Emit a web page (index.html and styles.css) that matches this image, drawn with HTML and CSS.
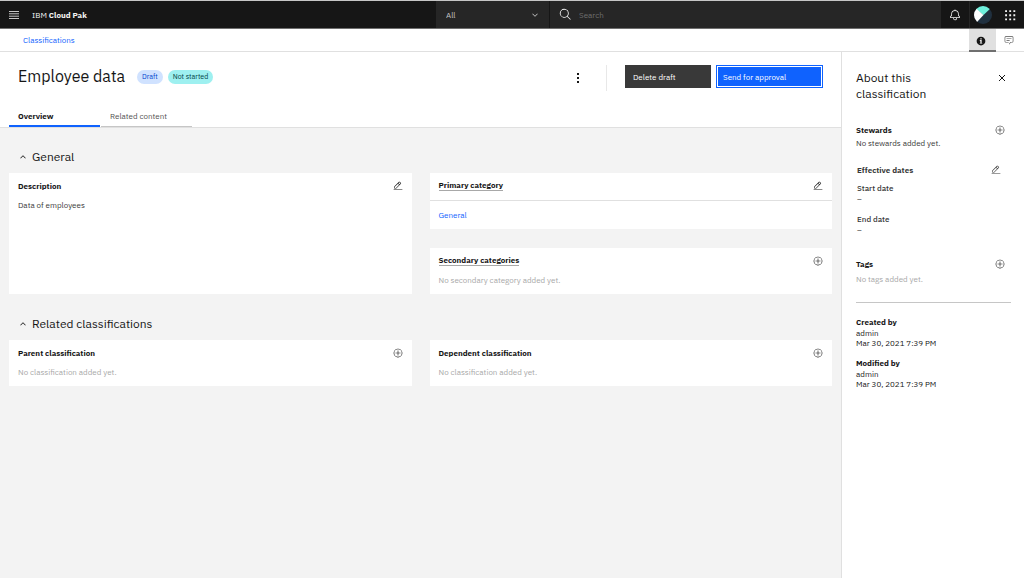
FILE: index.html
```html
<!DOCTYPE html>
<html lang="en">
<head>
<meta charset="utf-8">
<meta name="viewport" content="width=device-width, initial-scale=1">
<title>Employee data</title>
<link rel="stylesheet" href="styles.css">
</head>
<body>
<svg class="sprite" aria-hidden="true">
  <symbol id="add" viewBox="0 0 32 32"><path d="M16 4a12 12 0 1 1-12 12A12 12 0 0 1 16 4m0-2a14 14 0 1 0 14 14A14 14 0 0 0 16 2Z"/><path d="M24 15h-7V8h-2v7H8v2h7v7h2v-7h7z"/></symbol>
  <symbol id="edit" viewBox="0 0 32 32"><path d="M2 27h28v2H2zM25.4 9c.8-.8.8-2 0-2.8l-3.6-3.6c-.8-.8-2-.8-2.8 0l-15 15V24h6.400zM20.400 4 24 7.600l-3 3L17.400 7zM6 22v-3.600l10-10 3.600 3.600-10 10z"/></symbol>
  <symbol id="chevron-down" viewBox="0 0 32 32"><path d="M16 23 5 12l2-2 9 9 9-9 2 2z"/></symbol>
  <symbol id="chevron-up" viewBox="0 0 32 32"><path d="m16 9 11 11-2 2-9-9-9 9-2-2z"/></symbol>
</svg>

<header class="topbar">
  <button class="icon-button menu" aria-label="Menu"><svg class="menu-icon" viewBox="0 0 10 8"><path d="M0 .5h10M0 2.800h10M0 5.200h10M0 7.500h10"/></svg></button>
  <a class="brand" href="#">IBM <strong>Cloud Pak</strong></a>
  <div class="scope">
    <select aria-label="Search scope"><option>All</option></select>
    <svg class="chevron"><use href="#chevron-down"/></svg>
  </div>
  <label class="search">
    <svg class="search-icon" viewBox="0 0 32 32"><path d="m29 27.600-7.600-7.500A11 11 0 1 0 20 21.500l7.600 7.500zM4 13a9 9 0 1 1 9 9 9 9 0 0 1-9-9z"/></svg>
    <input type="search" placeholder="Search" aria-label="Search">
  </label>
  <button class="icon-button tool" aria-label="Notifications"><svg class="bell" viewBox="0 0 32 32"><path d="M28.700 19.300 26 16.600V13a10 10 0 0 0-9-9.900V1h-2v2.100A10 10 0 0 0 6 13v3.600l-2.700 2.700A1 1 0 0 0 3 20v3a1 1 0 0 0 1 1h7v.8a5.100 5.100 0 0 0 4.500 5.200A5 5 0 0 0 21 25v-1h7a1 1 0 0 0 1-1v-3a1 1 0 0 0-.3-.7zM19 25a3 3 0 0 1-6 0v-1h6zm8-3H5v-1.600l2.700-2.700A1 1 0 0 0 8 17v-4a8 8 0 0 1 16 0v4a1 1 0 0 0 .3.700l2.700 2.700z"/></svg></button>
  <button class="icon-button tool profile" aria-label="Profile"><svg class="avatar" viewBox="0 0 18 18"><defs><clipPath id="disc"><circle cx="9" cy="9" r="9"/></clipPath></defs><g clip-path="url(#disc)"><path fill="#20303f" d="M0 0h18v18H0z"/><path fill="#6ff0dc" d="M0 0h18v1L9.500 9 2 3z"/><path fill="#fff" d="M0 1 3 3.200 9.500 9 3 16 0 18z"/></g></svg></button>
  <button class="icon-button tool" aria-label="App switcher"><svg class="grid-icon" viewBox="0 0 32 32"><path d="M3 3h5v5H3zM14 3h5v5h-5zM25 3h5v5h-5zM3 14h5v5H3zM14 14h5v5h-5zM25 14h5v5h-5zM3 25h5v5H3zM14 25h5v5h-5zM25 25h5v5h-5z"/></svg></button>
</header>

<div class="subbar">
  <nav class="breadcrumb" aria-label="Breadcrumb"><a href="#">Classifications</a></nav>
  <button class="icon-button panel-toggle active" aria-label="Information"><svg class="info" viewBox="0 0 32 32"><path d="M16 2a14 14 0 1 0 0 28 14 14 0 0 0 0-28z"/><path fill="#fff" d="M14 7h4v4h-4zM12 13h6v9h2v2h-8v-2h2v-7h-2z"/></svg></button>
  <button class="icon-button panel-toggle" aria-label="Comments"><svg class="comment" viewBox="0 0 32 32"><path d="M17.700 30 16 29l4-7h6a2 2 0 0 0 2-2V8a2 2 0 0 0-2-2H6a2 2 0 0 0-2 2v12a2 2 0 0 0 2 2h9v2H6a4 4 0 0 1-4-4V8a4 4 0 0 1 4-4h20a4 4 0 0 1 4 4v12a4 4 0 0 1-4 4h-4.800z"/><path d="M8 10h16v2H8zM8 16h10v2H8z"/></svg></button>
</div>

<div class="layout">
  <main class="main">
    <div class="page-header">
      <div class="title-row">
        <h1>Employee data</h1>
        <span class="tag draft">Draft</span>
        <span class="tag status">Not started</span>
        <div class="actions">
          <button class="icon-button overflow" aria-label="More actions"><svg class="kebab" viewBox="0 0 4 10"><path d="M1 0h2v2H1zM1 4h2v2H1zM1 8h2v2H1z"/></svg></button>
          <button class="button secondary">Delete draft</button>
          <button class="button primary">Send for approval</button>
        </div>
      </div>
      <nav class="tabs" aria-label="Sections">
        <a class="tab selected" href="#" aria-current="page">Overview</a>
        <a class="tab" href="#">Related content</a>
      </nav>
    </div>

    <section class="section">
      <h2><button class="section-toggle" aria-expanded="true"><svg class="chevron"><use href="#chevron-up"/></svg>General</button></h2>
      <div class="columns">
        <article class="card">
          <div class="card-head"><h3>Description</h3><button class="icon-button" aria-label="Edit description"><svg class="icon"><use href="#edit"/></svg></button></div>
          <p class="card-text">Data of employees</p>
        </article>
        <div class="stack">
          <article class="card">
            <div class="card-head ruled"><h3 class="term">Primary category</h3><button class="icon-button" aria-label="Edit primary category"><svg class="icon"><use href="#edit"/></svg></button></div>
            <p class="card-value"><a href="#">General</a></p>
          </article>
          <article class="card">
            <div class="card-head"><h3 class="term">Secondary categories</h3><button class="icon-button" aria-label="Add secondary category"><svg class="icon"><use href="#add"/></svg></button></div>
            <p class="card-text empty">No secondary category added yet.</p>
          </article>
        </div>
      </div>
    </section>

    <section class="section">
      <h2><button class="section-toggle" aria-expanded="true"><svg class="chevron"><use href="#chevron-up"/></svg>Related classifications</button></h2>
      <div class="columns">
        <article class="card">
          <div class="card-head"><h3>Parent classification</h3><button class="icon-button" aria-label="Add parent classification"><svg class="icon"><use href="#add"/></svg></button></div>
          <p class="card-text empty">No classification added yet.</p>
        </article>
        <article class="card">
          <div class="card-head"><h3>Dependent classification</h3><button class="icon-button" aria-label="Add dependent classification"><svg class="icon"><use href="#add"/></svg></button></div>
          <p class="card-text empty">No classification added yet.</p>
        </article>
      </div>
    </section>
  </main>

  <aside class="about">
    <div class="about-head"><h2>About this classification</h2><button class="icon-button" aria-label="Close"><svg class="close" viewBox="0 0 8 8"><path d="m1 1 6 6M7 1 1 7"/></svg></button></div>
    <section class="fact stewards">
      <div class="fact-head"><h3>Stewards</h3><button class="icon-button" aria-label="Add steward"><svg class="icon"><use href="#add"/></svg></button></div>
      <p>No stewards added yet.</p>
    </section>
    <section class="fact dates">
      <div class="fact-head"><h3>Effective dates</h3><button class="icon-button" aria-label="Edit effective dates"><svg class="icon"><use href="#edit"/></svg></button></div>
      <dl>
        <dt>Start date</dt><dd>–</dd>
        <dt>End date</dt><dd>–</dd>
      </dl>
    </section>
    <section class="fact tags">
      <div class="fact-head"><h3>Tags</h3><button class="icon-button" aria-label="Add tag"><svg class="icon"><use href="#add"/></svg></button></div>
      <p class="empty">No tags added yet.</p>
    </section>
    <section class="audit">
      <h3>Created by</h3>
      <p>admin<br>Mar 30, 2021 7:39 PM</p>
      <h3>Modified by</h3>
      <p>admin<br>Mar 30, 2021 7:39 PM</p>
    </section>
  </aside>
</div>
</body>
</html>
```
FILE: styles.css
```css
* { box-sizing: border-box; }

body {
  margin: 0;
  min-height: 100vh;
  display: flex;
  flex-direction: column;
  background: #fff;
  color: #161616;
  font: 8px/12px "IBM Plex Sans", "Noto Sans", sans-serif;
}

h1, h2, h3, p, dl, dd { margin: 0; font-size: inherit; font-weight: 400; }
h3 { font-weight: 700; }
a { color: #0f62fe; text-decoration: none; }
button, input, select { font: inherit; color: inherit; border: 0; border-radius: 0; background: none; padding: 0; margin: 0; }
svg { display: block; fill: currentColor; flex: none; }
.sprite { position: absolute; width: 0; height: 0; }

.icon-button { display: flex; align-items: center; justify-content: center; flex: none; }
.icon { width: 10px; height: 10px; }
.chevron { width: 8px; height: 8px; }

.topbar {
  display: flex;
  height: 29px;
  border-top: 1px solid #c6c6c6;
  border-bottom: 1px solid #6f6f6f;
  background: #161616;
  color: #f4f4f4;
}
.menu { width: 28px; }
.menu-icon { width: 10px; height: 8px; fill: none; stroke: #c6c6c6; }
.brand { flex: 404; align-self: center; padding-left: 4px; color: #f4f4f4; }
.scope { flex: 113; display: grid; align-items: center; background: #262626; border-right: 1px solid #161616; color: #c6c6c6; }
.scope select { grid-area: 1 / 1; height: 27px; width: 100%; padding: 1px 10px 0; appearance: none; background: #262626; }
.scope .chevron { grid-area: 1 / 1; justify-self: end; margin-right: 10px; pointer-events: none; }
.search { flex: 382; display: flex; align-items: center; gap: 7px; padding-left: 9px; background: #262626; }
.search-icon { width: 13px; height: 13px; }
.search input { flex: 1; min-width: 0; outline-offset: -1px; }
.search input::placeholder { color: #6f6f6f; opacity: 1; }
.tool { width: 28px; }
.profile { width: 27px; border-left: 1px solid #262626; }
.bell { width: 12px; height: 12px; }
.avatar { width: 18px; height: 18px; }
.grid-icon { width: 12px; height: 12px; }

.subbar { display: flex; height: 23px; border-bottom: 1px solid #e0e0e0; }
.breadcrumb { flex: 1; align-self: center; padding-left: 23px; }
.panel-toggle { width: 28px; height: 23px; padding-right: 3px; border-bottom: 2px solid transparent; color: #525252; }
.panel-toggle.active { width: 27px; padding-top: 2px; border-color: #6f6f6f; background: #e0e0e0; color: #161616; }
.info, .comment { width: 10px; height: 10px; }

.layout { flex: 1; display: flex; }
.main { flex: 1; min-width: 0; background: #f3f3f3; }

.page-header { background: #fff; border-bottom: 1px solid #e0e0e0; }
.title-row { display: flex; align-items: flex-start; height: 54px; padding: 13px 18px 0; }
h1 { font-size: 16px; line-height: 23px; margin-right: 12px; }
.tag { height: 14px; margin-top: 5px; padding: 0 5px; border-radius: 7px; font-size: 7px; line-height: 14px; }
.draft { background: #d0e2ff; color: #0043ce; margin-right: 5px; }
.status { background: #9ef0f0; color: #004144; }
.actions { display: flex; align-items: flex-start; gap: 5px; margin-left: auto; }
.overflow { width: 58px; height: 26px; border-right: 1px solid #e8e8e8; margin-right: 13px; }
.kebab { width: 4px; height: 10px; }
.button { height: 23px; padding: 0 8px; text-align: left; color: #fff; }
.secondary { width: 86px; background: #393939; }
.primary { width: 107px; padding: 0 6px; background: #0f62fe; border: 1px solid #0f62fe; box-shadow: inset 0 0 0 1px #fff; }

.tabs { display: flex; gap: 1px; padding: 0 9px; }
.tab { width: 91px; height: 21px; padding: 4px 9px 0; border-bottom: 1px solid #c6c6c6; color: #525252; }
.selected { border-bottom: 2px solid #0f62fe; color: #161616; font-weight: 700; }

.section { padding: 19px 9px 0; }
.section + .section { padding-top: 20px; }
.section-toggle { display: flex; align-items: center; gap: 5px; padding-left: 10px; margin-bottom: 6px; font-size: 12px; line-height: 20px; }
.columns { display: grid; grid-template-columns: 1fr 1fr; gap: 18px; }
.stack { display: grid; gap: 19px; }
.card { background: #fff; }
.card-head { display: flex; justify-content: space-between; align-items: center; height: 27px; padding: 0 9px 2px; }
.ruled { height: 28px; border-bottom: 1px solid #e0e0e0; }
.term { line-height: 10px; border-bottom: 1px solid #a8a8a8; }
.card-text { padding: 0 9px 8px; line-height: 11px; color: #393939; }
.card-value { padding: 9px 9px 8px; line-height: 11px; }
.empty, .card-text.empty { color: #a8a8a8; }

.about { width: 183px; padding: 18px 13px 18px 14px; border-left: 1px solid #e0e0e0; }
.about-head { display: flex; justify-content: space-between; align-items: flex-start; margin-bottom: 22px; padding-right: 5px; }
.about-head h2 { width: 90px; font-size: 12px; line-height: 16px; }
.about-head .icon-button { height: 16px; }
.close { width: 8px; height: 8px; fill: none; stroke: currentColor; }
.fact-head { display: flex; justify-content: space-between; align-items: center; height: 12px; padding-right: 6px; }
.fact p { line-height: 15px; color: #393939; }
.fact p.empty { line-height: 18px; color: #a8a8a8; }
.dates { margin: 13px 0 23px; padding: 0 4px 0 1px; color: #393939; }
.dates dl { padding-top: 6px; }
.dates dt { font-weight: 500; }
.dates dd { line-height: 10px; margin-bottom: 9px; }
.dates dd:last-child { margin-bottom: 0; }
.tags { padding-bottom: 14px; border-bottom: 1px solid #c6c6c6; }
.audit { padding-top: 13px; }
.audit p { line-height: 10px; margin-bottom: 9px; }
```
